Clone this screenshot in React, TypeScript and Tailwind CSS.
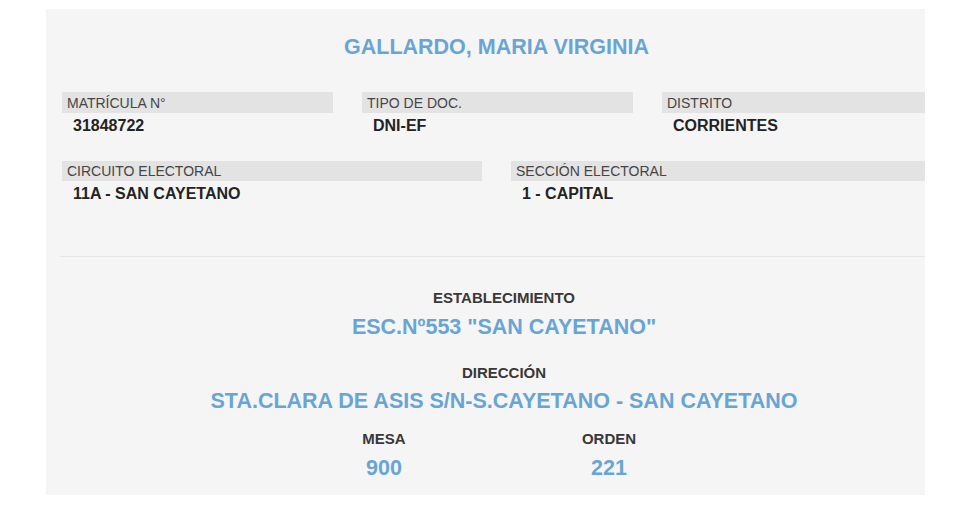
const BLUE = "text-[#68a5d4]";

function Field({ label, value, barH }: { label: string; value: string; barH: string }) {
  return (
    <div className="min-w-0">
      <div className={`${barH} bg-[#e3e3e3] pl-[5px] flex items-center text-[14px] leading-none text-[#454545] whitespace-nowrap`}>
        {label}
      </div>
      <div className="mt-[3px] pl-[11px] text-[16px] leading-[20px] font-bold text-[#232323] whitespace-nowrap">
        {value}
      </div>
    </div>
  );
}

export default function App() {
  return (
    <div className="min-h-[517px] bg-white pt-[9px] pl-[46px]" style={{ fontFamily: "'Liberation Sans', Arial, sans-serif" }}>
      <div className="w-[879px] h-[486px] bg-[#f5f5f5] overflow-hidden">
        <div className="w-[900px] pl-4 pt-6">
          <div className={`pr-[15px] text-center text-[21.5px] leading-[28px] font-bold ${BLUE}`}>
            GALLARDO, MARIA VIRGINIA
          </div>

          <div className="mt-[31px] grid grid-cols-[271px_271px_271px] gap-x-[29px]">
            <Field label="MATRÍCULA N°" value="31848722" barH="h-[21px]" />
            <Field label="TIPO DE DOC." value="DNI-EF" barH="h-[21px]" />
            <Field label="DISTRITO" value="CORRIENTES" barH="h-[21px]" />
          </div>

          <div className="mt-[25px] grid grid-cols-[420px_420px] gap-x-[29px]">
            <Field label="CIRCUITO ELECTORAL" value="11A - SAN CAYETANO" barH="h-[20px]" />
            <Field label="SECCIÓN ELECTORAL" value="1 - CAPITAL" barH="h-[20px]" />
          </div>
        </div>

        <div className="ml-[14px] mt-[52px] h-px bg-[#e6e6e6]" />

        <div className="w-[900px] pl-4 text-center">
          <div className="mt-[31px] text-[15px] leading-[20px] font-bold text-[#383838]">ESTABLECIMIENTO</div>
          <div className={`mt-[5px] text-[21.5px] leading-[28px] font-bold ${BLUE}`}>ESC.Nº553 "SAN CAYETANO"</div>
          <div className="mt-[22px] text-[15px] leading-[20px] font-bold text-[#383838]">DIRECCIÓN</div>
          <div className={`mt-[4px] text-[21.5px] leading-[28px] font-bold ${BLUE}`}>
            STA.CLARA DE ASIS S/N-S.CAYETANO - SAN CAYETANO
          </div>
          <div className="mt-[14px] pr-[15px] flex justify-center">
            {[
              ["MESA", "900"],
              ["ORDEN", "221"],
            ].map(([l, v]) => (
              <div key={l} className="w-[225px]">
                <div className="text-[15px] leading-[20px] font-bold text-[#383838]">{l}</div>
                <div className={`mt-[5px] text-[21.5px] leading-[28px] font-bold ${BLUE}`}>{v}</div>
              </div>
            ))}
          </div>
        </div>
      </div>
    </div>
  );
}
